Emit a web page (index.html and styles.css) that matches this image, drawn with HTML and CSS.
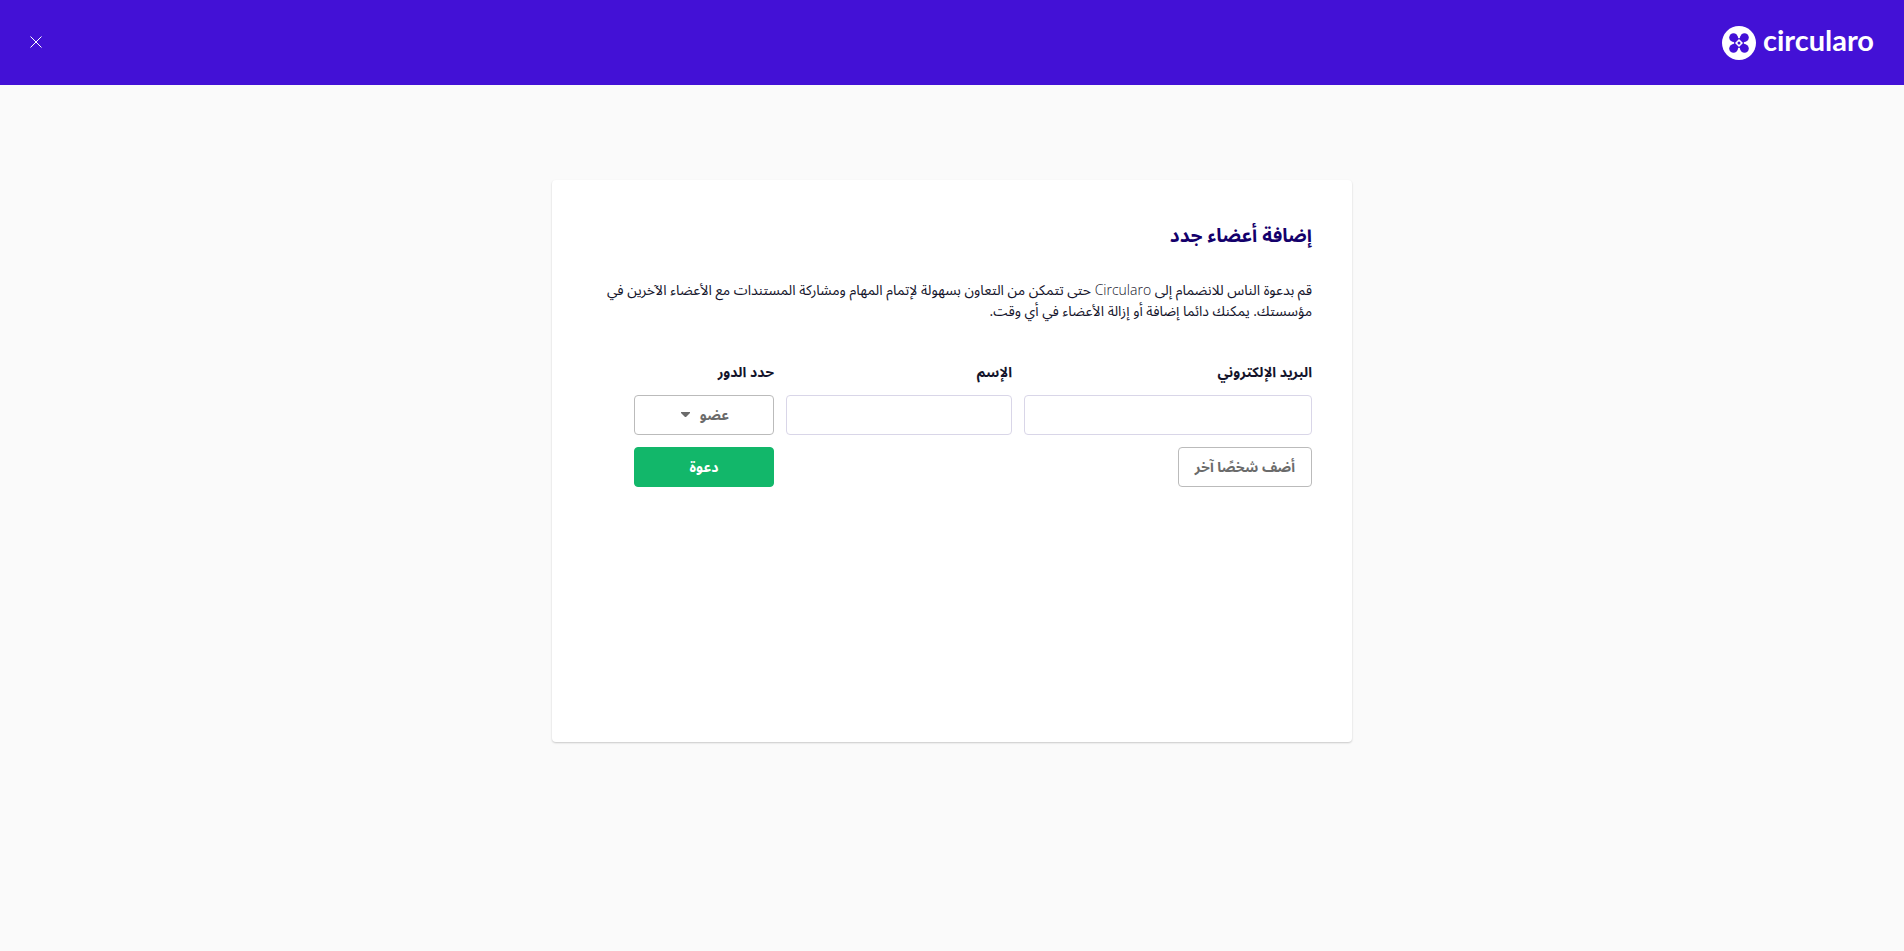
FILE: index.html
```
<!DOCTYPE html>
<html lang="ar" dir="rtl">
<head>
  <meta charset="utf-8">
  <meta name="viewport" content="width=device-width, initial-scale=1">
  <title>إضافة أعضاء جدد</title>
  <link rel="stylesheet" href="styles.css">
</head>
<body>
  <header class="topbar">
    <a class="brand" href="#" dir="ltr">
      <svg class="brand-mark" viewBox="0 0 34 34" aria-hidden="true">
        <circle cx="17" cy="17" r="17" fill="#fff"/>
        <g fill="#4311d6">
          <circle cx="11.500" cy="11.500" r="4.300"/>
          <circle cx="22.500" cy="11.500" r="4.300"/>
          <circle cx="11.500" cy="22.500" r="4.300"/>
          <circle cx="22.500" cy="22.500" r="4.300"/>
          <path d="M15.300 10 Q15.600 11.800 17 12.400 Q18.400 11.800 18.700 10 L24 15.300 Q22.200 15.600 21.600 17 Q22.200 18.400 24 18.700 L18.700 24 Q18.400 22.200 17 21.600 Q15.600 22.200 15.300 24 L10 18.700 Q11.800 18.400 12.400 17 Q11.800 15.600 10 15.300 Z"/>
        </g>
        <path d="M17 13 21 17 17 21 13 17Z" fill="#fff"/>
        <circle cx="17" cy="17" r="1.500" fill="#4311d6"/>
      </svg>
      <span class="brand-name">circularo</span>
    </a>
    <button class="close" type="button" aria-label="إغلاق">
      <svg class="close-icon" viewBox="0 0 12 12" aria-hidden="true">
        <path d="M.5 .5 11.500 11.500M11.500 .5 .5 11.500" stroke="#fff" stroke-width="1"/>
      </svg>
    </button>
  </header>

  <main class="page">
    <section class="card">
      <h1 class="title">إضافة أعضاء جدد</h1>
      <p class="intro">قم بدعوة الناس للانضمام إلى <span class="product">Circularo</span> حتى تتمكن من التعاون بسهولة لإتمام المهام ومشاركة المستندات مع الأعضاء الآخرين في مؤسستك. يمكنك دائما إضافة أو إزالة الأعضاء في أي وقت.</p>
      <form class="form">
        <div class="field">
          <label class="label" for="email">البريد الإلكتروني</label>
          <input class="control" id="email" type="email">
        </div>
        <div class="field">
          <label class="label" for="name">الإسم</label>
          <input class="control" id="name" type="text">
        </div>
        <div class="field">
          <label class="label" for="role">حدد الدور</label>
          <div class="select">
            <select class="control role" id="role"><option>عضو</option></select>
            <svg class="caret" viewBox="0 0 9 5" aria-hidden="true"><path d="M0 0H9V1L5 5H4L0 1Z" fill="#6b6b6b"/></svg>
          </div>
        </div>
        <button class="button add" type="button">أضف شخصًا آخر</button>
        <button class="button invite" type="submit">دعوة</button>
      </form>
    </section>
  </main>
</body>
</html>
```
FILE: styles.css
```
* { box-sizing: border-box; }

body {
  margin: 0;
  background: #fafafa;
  color: #14142b;
  font-family: "Open Sans", "Noto Sans Arabic", "Noto Sans", "DejaVu Sans", sans-serif;
  font-size: 14px;
}

.topbar {
  display: flex;
  align-items: center;
  justify-content: space-between;
  height: 85px;
  padding: 0 30px;
  background: #4311d6;
}

.brand {
  display: flex;
  align-items: center;
  gap: 7px;
  color: #fff;
  text-decoration: none;
}

.brand-mark { width: 34px; height: 34px; }

.brand-name {
  padding-bottom: 6px;
  font-family: Lato, sans-serif;
  font-size: 29px;
  font-weight: 700;
  line-height: 34px;
}

.close {
  display: flex;
  padding: 0 0 1px;
  border: 0;
  background: none;
  cursor: pointer;
}

.close-icon { width: 12px; height: 12px; }

.page { padding: 95px 16px; }

.card {
  max-width: 800px;
  min-height: 562px;
  margin: 0 auto;
  padding: 40px;
  border-radius: 4px;
  background: #fff;
  box-shadow: 0 1px 2px rgba(0, 0, 0, .2);
}

.title {
  margin: 0 0 29px;
  color: #14006b;
  font-size: 19px;
  font-weight: 700;
  line-height: 30px;
}

.intro {
  margin: 0 0 40px;
  font-weight: 400;
  line-height: 21px;
}

.product { font-weight: 300; }

.form {
  display: grid;
  grid-template-columns: 288fr 226fr 140px;
  gap: 12px;
  padding-left: 42px;
}

.field {
  display: flex;
  flex-direction: column;
  gap: 12px;
}

.label {
  font-weight: 700;
  line-height: 22px;
}

.control {
  width: 100%;
  height: 40px;
  padding: 0 12px;
  border: 1px solid #d9d6e8;
  border-radius: 4px;
  background: #fff;
  font: inherit;
}

.select { position: relative; }

.role {
  padding: 0 44px 2px;
  border-color: #bbb;
  color: #6b6b6b;
  font-weight: 700;
  appearance: none;
}

.caret {
  position: absolute;
  top: 17px;
  left: 47px;
  width: 9px;
  height: 5px;
  pointer-events: none;
}

.button {
  height: 40px;
  padding: 0 16px;
  border: 1px solid #bbb;
  border-radius: 4px;
  background: #fff;
  color: #6b6b6b;
  font: inherit;
  font-weight: 700;
  cursor: pointer;
}

.add { justify-self: start; }

.invite {
  grid-column: 3;
  border-color: #12b76a;
  background: #12b76a;
  color: #fff;
}
```
